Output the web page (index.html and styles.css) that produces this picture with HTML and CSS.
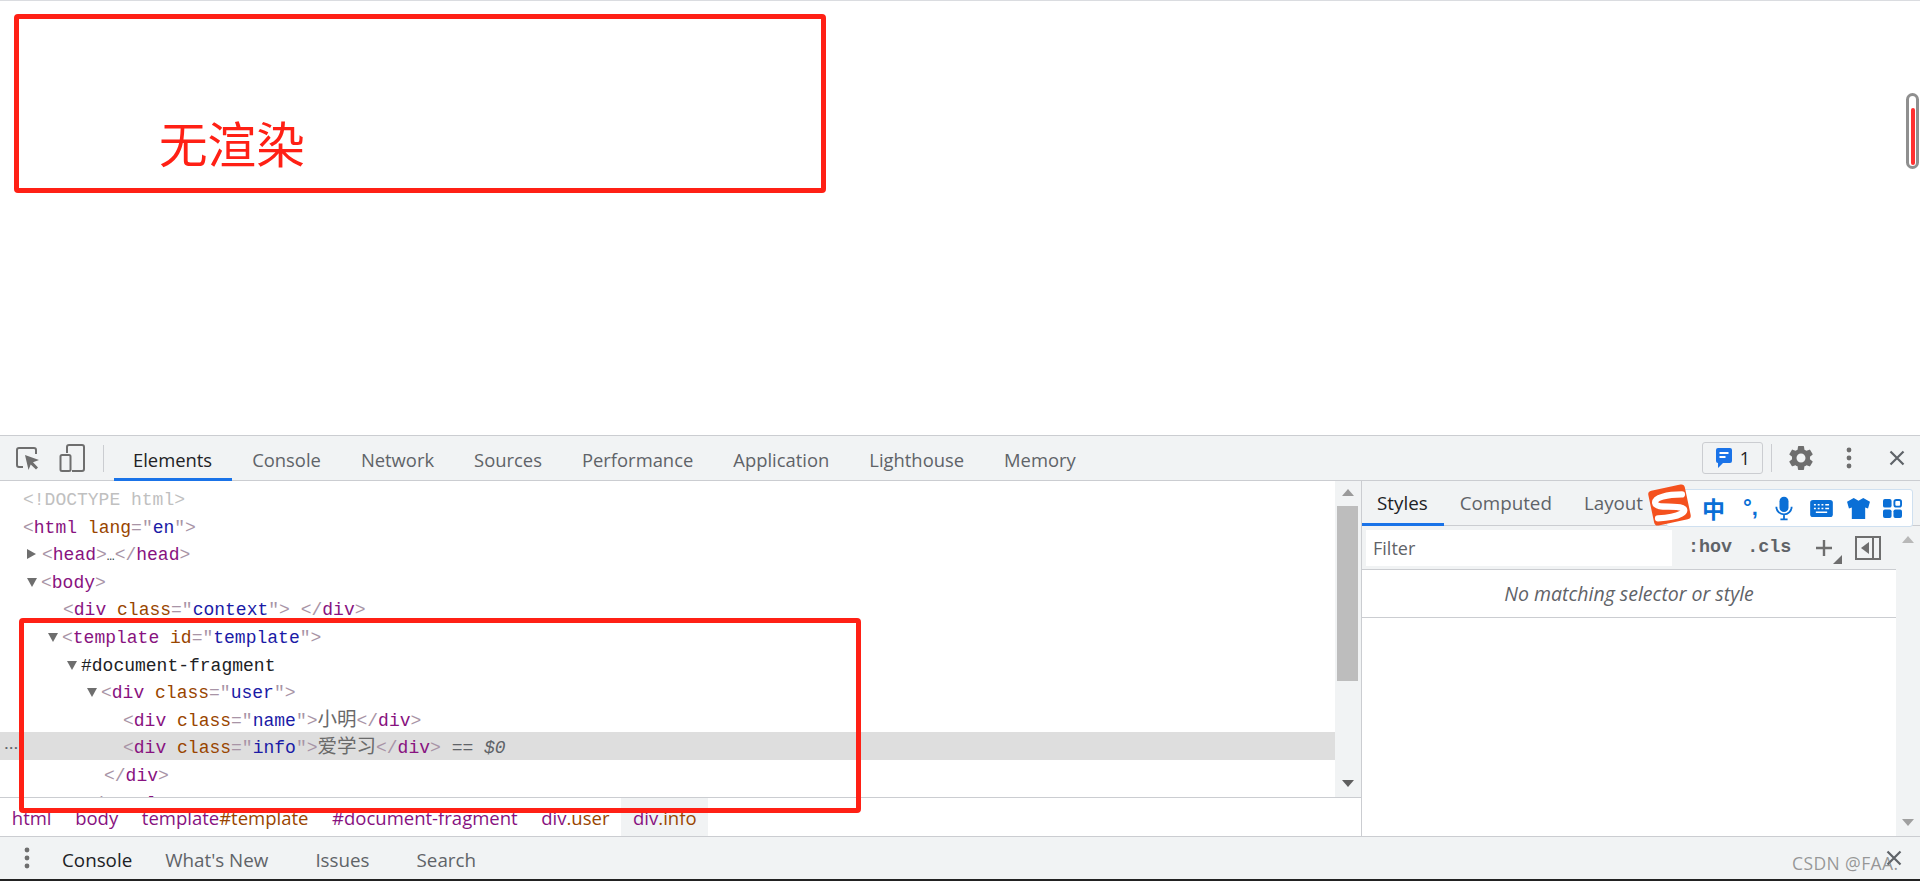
FILE: index.html
```html
<!DOCTYPE html>
<html lang="zh-CN">
<head>
<meta charset="utf-8">
<title>无渲染</title>
<link rel="stylesheet" href="styles.css">
</head>
<body>
<div class="app">
  <section class="page">
    <div class="rendered">无渲染</div>
  </section>

  <header class="toolbar">
    <div class="tool-icons">
      <svg class="ic-inspect" viewBox="0 0 24 24"><path class="line-gray" d="M8 21H4a2 2 0 0 1-2-2V4a2 2 0 0 1 2-2h15a2 2 0 0 1 2 2v4"/><path class="fill-gray" d="M10 9l14 5-6 2.200 5 5.300-2 2-5.300-5-2.200 5.500z"/></svg>
      <svg class="ic-device" viewBox="0 0 26 28"><path class="line-gray" d="M8 9V3a2 2 0 0 1 2-2h13a2 2 0 0 1 2 2v22a2 2 0 0 1-2 2H13"/><rect class="line-gray" x="1.500" y="11" width="10" height="16" rx="1.500"/></svg>
    </div>
    <div class="divider"></div>
    <nav class="tabs">
      <span class="tab active">Elements</span>
      <span class="tab">Console</span>
      <span class="tab">Network</span>
      <span class="tab">Sources</span>
      <span class="tab">Performance</span>
      <span class="tab">Application</span>
      <span class="tab">Lighthouse</span>
      <span class="tab">Memory</span>
    </nav>
    <div class="tool-right">
      <div class="badge">
        <svg class="ic-msg" viewBox="0 0 18 22"><path class="fill-blue" d="M3 1h12a2 2 0 0 1 2 2v11a2 2 0 0 1-2 2H8l-5 5v-5a2 2 0 0 1-2-2V3a2 2 0 0 1 2-2z"/><path class="line-white" d="M4.500 6h9M4.500 10h6"/></svg>
        <span>1</span>
      </div>
      <div class="divider small"></div>
      <svg class="ic-gear" viewBox="0 0 24 24"><path class="fill-gray" d="M19.140 12.940c.04-.3.06-.61.06-.94 0-.32-.02-.64-.07-.94l2.030-1.580a.49.49 0 0 0 .12-.61l-1.920-3.320a.488.488 0 0 0-.59-.22l-2.390.96c-.5-.38-1.030-.7-1.620-.94l-.36-2.540a.484.484 0 0 0-.48-.41h-3.840c-.24 0-.43.17-.47.41l-.36 2.540c-.59.24-1.130.57-1.620.94l-2.390-.96c-.22-.08-.47 0-.59.22L2.740 8.870c-.12.21-.08.47.12.61l2.030 1.580c-.05.3-.09.63-.09.94s.02.64.07.94l-2.030 1.580a.49.49 0 0 0-.12.61l1.920 3.320c.12.22.37.29.59.22l2.390-.96c.5.38 1.030.7 1.620.94l.36 2.540c.05.24.24.41.48.41h3.840c.24 0 .44-.17.47-.41l.36-2.540c.59-.24 1.130-.56 1.620-.94l2.390.96c.22.08.47 0 .59-.22l1.920-3.320c.12-.22.07-.47-.12-.61l-2.010-1.580zM12 15.600c-1.980 0-3.600-1.620-3.600-3.600s1.620-3.600 3.600-3.600 3.600 1.620 3.600 3.600-1.620 3.600-3.600 3.600z"/></svg>
      <svg class="ic-dots" viewBox="0 0 6 22"><circle class="fill-gray" cx="3" cy="3" r="2.400"/><circle class="fill-gray" cx="3" cy="11" r="2.400"/><circle class="fill-gray" cx="3" cy="19" r="2.400"/></svg>
      <svg class="ic-close" viewBox="0 0 16 16"><path class="line-close" d="M1.500 1.500l13 13M14.500 1.500l-13 13"/></svg>
    </div>
  </header>

  <main class="main">
    <div class="left">
      <div class="tree-wrap">
        <div class="tree">
          <div class="row d0 doctype">&lt;!DOCTYPE html&gt;</div>
          <div class="row d0"><span class="b">&lt;</span><span class="t">html</span> <span class="a">lang</span><span class="b">=</span><span class="b">"</span><span class="v">en</span><span class="b">"&gt;</span></div>
          <div class="row d1"><i class="arrow right"></i><span class="b">&lt;</span><span class="t">head</span><span class="b">&gt;</span><span class="ell">…</span><span class="b">&lt;/</span><span class="t">head</span><span class="b">&gt;</span></div>
          <div class="row d1"><i class="arrow down"></i><span class="b">&lt;</span><span class="t">body</span><span class="b">&gt;</span></div>
          <div class="row d2"><span class="b">&lt;</span><span class="t">div</span> <span class="a">class</span><span class="b">="</span><span class="v">context</span><span class="b">"&gt;</span> <span class="b">&lt;/</span><span class="t">div</span><span class="b">&gt;</span></div>
          <div class="row d3"><i class="arrow down"></i><span class="b">&lt;</span><span class="t">template</span> <span class="a">id</span><span class="b">="</span><span class="v">template</span><span class="b">"&gt;</span></div>
          <div class="row d4 frag"><i class="arrow down"></i>#document-fragment</div>
          <div class="row d5"><i class="arrow down"></i><span class="b">&lt;</span><span class="t">div</span> <span class="a">class</span><span class="b">="</span><span class="v">user</span><span class="b">"&gt;</span></div>
          <div class="row d6"><span class="b">&lt;</span><span class="t">div</span> <span class="a">class</span><span class="b">="</span><span class="v">name</span><span class="b">"&gt;</span><span class="cjk">小明</span><span class="b">&lt;/</span><span class="t">div</span><span class="b">&gt;</span></div>
          <div class="row d6 selected"><span class="more">•••</span><span class="b">&lt;</span><span class="t">div</span> <span class="a">class</span><span class="b">="</span><span class="v">info</span><span class="b">"&gt;</span><span class="cjk">爱学习</span><span class="b">&lt;/</span><span class="t">div</span><span class="b">&gt;</span> <span class="eq">==</span> <em class="eq">$0</em></div>
          <div class="row d5b"><span class="b">&lt;/</span><span class="t">div</span><span class="b">&gt;</span></div>
          <div class="row d4"><span class="b">&lt;/</span><span class="t">template</span><span class="b">&gt;</span></div>
        </div>
        <div class="scrollbar">
          <i class="sb-up"></i>
          <div class="sb-thumb"></div>
          <i class="sb-down"></i>
        </div>
      </div>
      <div class="crumbs">
        <span class="crumb"><span class="t">html</span></span>
        <span class="crumb"><span class="t">body</span></span>
        <span class="crumb"><span class="t">template</span><span class="a">#template</span></span>
        <span class="crumb"><span class="t">#document-fragment</span></span>
        <span class="crumb"><span class="t">div</span><span class="a">.user</span></span>
        <span class="crumb on"><span class="t">div</span><span class="a">.info</span></span>
      </div>
    </div>

    <aside class="side">
      <div class="side-tabs">
        <span class="stab active">Styles</span>
        <span class="stab">Computed</span>
        <span class="stab">Layout</span>
      </div>
      <div class="side-body">
        <div class="side-content">
          <div class="filter-row">
            <div class="filter">Filter</div>
            <span class="mono-btn hov">:hov</span>
            <span class="mono-btn cls">.cls</span>
            <svg class="ic-plus" viewBox="0 0 30 26"><path class="line-plus" d="M9 2v16M1 10h16"/><path class="fill-gray" d="M18 26h9v-9z"/></svg>
            <svg class="ic-toggle" viewBox="0 0 26 24"><rect class="line-gray" x="1" y="1" width="24" height="22"/><path class="line-gray" d="M18 1v22"/><path class="fill-gray" d="M14 6v12l-8-6z"/></svg>
          </div>
          <div class="no-match">No matching selector or style</div>
        </div>
        <div class="side-scroll">
          <i class="sb-up"></i>
          <i class="sb-down"></i>
        </div>
      </div>
    </aside>
  </main>

  <footer class="drawer">
    <svg class="ic-dots drawer-dots" viewBox="0 0 6 22"><circle class="fill-gray" cx="3" cy="3" r="2.400"/><circle class="fill-gray" cx="3" cy="11" r="2.400"/><circle class="fill-gray" cx="3" cy="19" r="2.400"/></svg>
    <span class="dtab first">Console</span>
    <span class="dtab">What's New</span>
    <span class="dtab">Issues</span>
    <span class="dtab">Search</span>
    <svg class="ic-close drawer-close" viewBox="0 0 16 16"><path class="line-close" d="M1.500 1.500l13 13M14.500 1.500l-13 13"/></svg>
  </footer>
  <div class="screen-edge"></div>

  <div class="mark mark-top"></div>
  <div class="mark mark-tree"></div>

  <div class="page-scroll"><div class="page-scroll-fill"></div></div>

  <div class="ime">
    <svg class="ime-logo" viewBox="0 0 48 46"><rect class="ime-logo-bg" x="4.500" y="4.500" width="39" height="37" rx="4" transform="rotate(-12 24 23)"/><path class="ime-logo-s" d="M37 12C22 12 8 15 9 21 10 27 28 23 37 26 44 29 36 36 12 37"/></svg>
    <span class="ime-txt zh">中</span>
    <span class="ime-txt punct">°,</span>
    <svg class="ime-ic mic" viewBox="0 0 20 26"><rect class="fill-ime" x="5" y="0" width="10" height="17" rx="5"/><path class="line-ime" d="M1.500 11a8.500 8.500 0 0 0 17 0M10 20v4M6 25h8"/></svg>
    <svg class="ime-ic kbd" viewBox="0 0 24 18"><rect class="fill-ime" width="24" height="18" rx="3"/><path class="line-white thin" d="M4 5h2M8 5h2M12 5h2M16 5h4M4 9h2M8 9h2M12 9h2M16 9h4M6 13h12"/></svg>
    <svg class="ime-ic shirt" viewBox="0 0 24 22"><path class="fill-ime" d="M7 0l5 3 5-3 7 4-2 7-3-1v12H5V10l-3 1-2-7z"/></svg>
    <svg class="ime-ic grid" viewBox="0 0 20 20"><rect class="fill-ime" width="9" height="9" rx="2"/><rect class="line-ime" x="12" y="1" width="7" height="7" rx="2"/><rect class="fill-ime" y="11" width="9" height="9" rx="2"/><rect class="fill-ime" x="11" y="11" width="9" height="9" rx="2"/></svg>
  </div>

  <div class="watermark">CSDN @FAA.</div>
</div>
</body>
</html>
```

FILE: styles.css
```css
* { box-sizing: border-box; }
html, body { margin: 0; padding: 0; height: 100%; overflow: hidden; background: #fff; }
.app {
  position: relative;
  width: 1920px;
  height: 881px;
  display: flex;
  flex-direction: column;
  font-family: "Open Sans", "Noto Sans", "Noto Sans CJK SC", sans-serif;
  color: #5f6368;
  overflow: hidden;
}
svg { display: block; flex: none; }
.fill-gray { fill: #6e6e6e; }
.fill-blue { fill: #1a73e8; }
.fill-ime { fill: #0a6fd6; }
.line-gray { fill: none; stroke: #6e6e6e; stroke-width: 2; }
.line-white { fill: none; stroke: #fff; stroke-width: 2; }
.line-white.thin { stroke-width: 1.6; }
.line-close { fill: none; stroke: #5f6368; stroke-width: 2.200; }
.line-plus { fill: none; stroke: #6e6e6e; stroke-width: 2.400; }
.line-ime { fill: none; stroke: #0a6fd6; stroke-width: 2; }

/* page area */
.page {
  height: 435px;
  flex: none;
  border-top: 1px solid #dadce0;
  background: #fff;
  padding: 115px 0 0 159px;
}
.rendered {
  font-family: "Noto Sans CJK SC", sans-serif;
  font-size: 48.600px;
  line-height: 52px;
  color: #ff2015;
}

/* top toolbar */
.toolbar {
  height: 46px;
  flex: none;
  display: flex;
  align-items: stretch;
  background: #f1f3f4;
  border-top: 1px solid #cbcdd1;
  border-bottom: 1px solid #cbcdd1;
}
.tool-icons { display: flex; align-items: center; gap: 20px; padding-left: 15px; width: 103px; }
.ic-inspect { width: 24px; height: 24px; }
.ic-device { width: 26px; height: 28px; }
.divider { width: 1px; margin: 9px 0 8px; background: #cbcdd1; }
.divider.small { margin: 8px 0 8px; }
.tabs { display: flex; margin-left: 10px; }
.tab {
  display: flex;
  align-items: center;
  padding: 4px 20px 0;
  font-size: 18.400px;
  color: #5f6368;
  margin-bottom: -1px;
  border-bottom: 3px solid transparent;
}
.tab.active { color: #202124; border-bottom-color: #1a73e8; padding-left: 19px; }
.tool-right { margin-left: auto; display: flex; align-items: center; padding-right: 15px; }
.badge {
  width: 61px;
  height: 32px;
  display: flex;
  align-items: center;
  justify-content: center;
  gap: 7px;
  border: 1px solid #cbcdd1;
  border-radius: 3px;
  font-size: 18px;
  color: #202124;
}
.ic-msg { width: 18px; height: 22px; }
.tool-right .divider { align-self: stretch; margin-left: 8px; }
.ic-gear { width: 30px; height: 30px; margin-left: 14px; }
.ic-dots { width: 6px; height: 22px; margin-left: 30px; }
.ic-close { width: 16px; height: 16px; margin-left: 37px; }

/* main split */
.main { flex: 1; min-height: 0; display: flex; }
.left {
  width: 1362px;
  flex: none;
  display: flex;
  flex-direction: column;
  border-right: 1px solid #cbcdd1;
}
.tree-wrap { flex: 1; min-height: 0; display: flex; }
.tree {
  width: 1335px;
  flex: none;
  padding-top: 3px;
  overflow: hidden;
  font-family: "Liberation Mono", "Noto Sans CJK SC", monospace;
  font-size: 18px;
  color: #303942;
}
.row {
  position: relative;
  height: 27.6px;
  line-height: 32px;
  white-space: pre;
}
.d0 { padding-left: 23px; }
.d1 { padding-left: 42px; }
.d2 { padding-left: 63px; }
.d3 { padding-left: 63px; }
.d4 { padding-left: 82px; }
.d5 { padding-left: 102px; }
.d5b { padding-left: 104px; }
.d6 { padding-left: 123px; }
.doctype { color: #c0c0c0; }
.frag { color: #202124; }
.selected { background: #dedede; }
.t { color: #881280; }
.a { color: #994500; }
.v { color: #1a1aa6; }
.b { color: #a894a6; }
.ell { color: #303942; font-size: 13px; }
.cjk { font-family: "Noto Sans CJK SC", sans-serif; font-size: 19.5px; line-height: 0; color: #6a6a6a; }
.eq { color: #5f6368; }
.more {
  position: absolute;
  left: 4px;
  top: 0;
  font-size: 8px;
  letter-spacing: 0;
  color: #5f6368;
}
.arrow {
  display: inline-block;
  width: 0;
  height: 0;
  vertical-align: 1px;
  margin-left: -15px;
  margin-right: 4px;
}
.arrow.down {
  border-left: 5.500px solid transparent;
  border-right: 5.500px solid transparent;
  border-top: 9px solid #6e6e6e;
}
.arrow.right {
  border-top: 5.500px solid transparent;
  border-bottom: 5.500px solid transparent;
  border-left: 9px solid #6e6e6e;
  margin-right: 6px;
}
.scrollbar {
  width: 26px;
  flex: none;
  background: #f1f3f4;
  display: flex;
  flex-direction: column;
  align-items: center;
  padding: 8px 3px 0 2px;
}
.sb-up, .sb-down { display: block; width: 0; height: 0; border-left: 6px solid transparent; border-right: 6px solid transparent; }
.sb-up { border-bottom: 7px solid #9a9a9a; }
.sb-down { border-top: 7px solid #5f5f5f; margin-top: 99px; }
.sb-thumb { width: 21px; height: 175px; margin-top: 10px; background: #bdbdbd; flex: none; }

.crumbs {
  height: 39px;
  flex: none;
  display: flex;
  gap: 0;
  border-top: 1px solid #cbcdd1;
  font-size: 18.500px;
  padding-left: 0;
}
.crumb { display: flex; align-items: center; padding: 0 11.800px; }
.crumb.on { background: #f1f3f4; }

/* sidebar */
.side { flex: 1; min-width: 0; display: flex; flex-direction: column; }
.side-tabs {
  height: 45px;
  flex: none;
  display: flex;
  background: #f1f3f4;
  border-bottom: 1px solid #cbcdd1;
}
.stab {
  display: flex;
  align-items: center;
  padding: 2px 16px 0;
  font-size: 18.800px;
  margin-bottom: -1px;
  border-bottom: 3px solid transparent;
}
.stab.active { color: #202124; border-bottom-color: #1a73e8; padding-left: 15px; }
.side-body { flex: 1; min-height: 0; display: flex; }
.side-content { flex: 1; min-width: 0; }
.side-scroll {
  width: 24px;
  flex: none;
  background: #f1f3f4;
  display: flex;
  flex-direction: column;
  align-items: center;
  padding-top: 10px;
}
.side-scroll .sb-up { border-bottom-color: #b8b8b8; }
.side-scroll .sb-down { border-top-color: #a0a0a0; margin-top: 276px; }
.filter-row {
  height: 44px;
  display: flex;
  align-items: center;
  background: #f1f3f4;
  border-bottom: 1px solid #cbcdd1;
  padding-left: 4px;
  position: relative;
}
.filter {
  width: 306px;
  height: 36px;
  background: #fff;
  padding-left: 7px;
  font-size: 18px;
  line-height: 36px;
  color: #5f6368;
}
.mono-btn {
  font-family: "Liberation Mono", monospace;
  font-size: 18.400px;
  font-weight: 700;
  color: #5f6368;
}
.hov { margin-left: 16px; }
.cls { margin-left: 15px; }
.ic-plus { width: 30px; height: 26px; margin-left: 24px; margin-top: 6px; }
.ic-toggle { width: 26px; height: 24px; margin-left: 10px; }
.no-match {
  height: 48px;
  border-bottom: 1px solid #cbcdd1;
  text-align: center;
  font-style: italic;
  font-size: 19.500px;
  line-height: 47px;
  color: #5f6368;
}

/* drawer */
.drawer {
  height: 43px;
  flex: none;
  display: flex;
  align-items: center;
  background: #f1f3f4;
  border-top: 1px solid #cbcdd1;
  font-size: 18.800px;
}
.dtab { margin-left: 47px; padding-top: 3px; }
.drawer-dots { margin-left: 24px; }
.dtab.first { margin-left: 32px; color: #202124; }
.dtab:nth-of-type(2) { margin-left: 33px; }
.drawer-close { margin-left: auto; margin-right: 18px; }
.screen-edge { height: 2px; flex: none; background: #222; }

/* overlays */
.mark {
  position: absolute;
  border: 5px solid #ff2015;
  border-radius: 4px;
  pointer-events: none;
}
.mark-top { left: 14px; top: 14px; width: 812px; height: 179px; }
.mark-tree { left: 19px; top: 618px; width: 842px; height: 195px; }
.page-scroll {
  position: absolute;
  left: 1906px;
  top: 93px;
  width: 13px;
  height: 76px;
  padding: 12px 1.5px 1px;
  border: 3px solid #8f8f8f;
  border-radius: 7px;
  background: #fff;
}
.page-scroll-fill { height: 100%; background: #ff3030; border-radius: 2px; }

.ime {
  position: absolute;
  left: 1646px;
  top: 483px;
  width: 267px;
  height: 44px;
  display: flex;
  align-items: center;
  color: #0a6fd6;
}
.ime::before {
  content: "";
  position: absolute;
  left: 20px;
  right: 0;
  top: 6px;
  bottom: 0;
  background: #fff;
  border: 1px solid #cfe0f0;
  border-radius: 3px;
}
.ime > * { position: relative; }
.ime-logo { width: 47px; height: 44px; }
.ime-logo-bg { fill: #f4511e; }
.ime-logo-s { fill: none; stroke: #fff; stroke-width: 6.500; stroke-linecap: round; }
.ime-txt { font-family: "Noto Sans CJK SC", sans-serif; font-weight: 700; line-height: 1; margin-top: 6px; }
.zh { font-size: 23px; margin-left: 9px; }
.punct { font-size: 22px; margin-left: 18px; font-family: "Liberation Sans", sans-serif; }
.ime-ic { margin-top: 6px; }
.mic { width: 18px; height: 25px; margin-left: 17px; }
.kbd { width: 23px; height: 17px; margin-left: 17px; }
.shirt { width: 23px; height: 21px; margin-left: 14px; }
.grid { width: 19px; height: 19px; margin-left: 13px; }

.watermark {
  position: absolute;
  left: 1792px;
  top: 852px;
  font-family: "Open Sans", sans-serif;
  font-size: 17.500px;
  line-height: 23px;
  letter-spacing: 0.4px;
  color: rgba(120, 120, 120, 0.75);
  white-space: nowrap;
}
```
